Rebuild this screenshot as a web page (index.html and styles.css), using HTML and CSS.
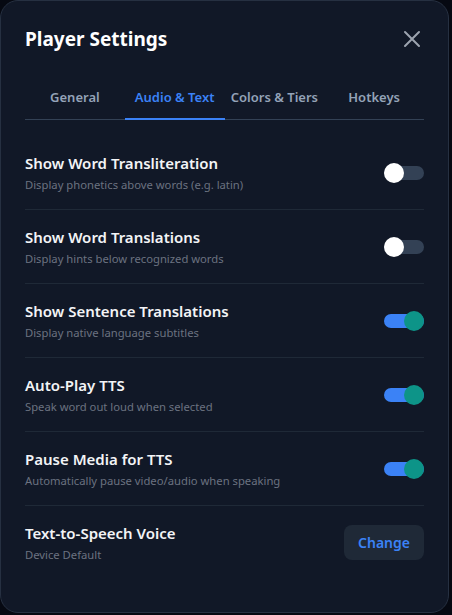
FILE: index.html
```html
<!DOCTYPE html>
<html lang="en">
<head>
  <meta charset="UTF-8" />
  <title>Player Settings</title>
  <link rel="stylesheet" href="styles.css">
</head>
<body>
  <div class="settings-modal">
    <div class="modal-header">
      <h2>Player Settings</h2>
      <button class="close-btn" aria-label="Close">
        <svg width="18" height="18" viewBox="0 0 18 18" fill="none" stroke="currentColor" stroke-width="2" stroke-linecap="round">
          <path d="M2 2 L16 16 M16 2 L2 16" />
        </svg>
      </button>
    </div>

    <div class="tabs">
      <button class="tab">General</button>
      <button class="tab active">Audio &amp; Text</button>
      <button class="tab">Colors &amp; Tiers</button>
      <button class="tab">Hotkeys</button>
    </div>

    <div class="setting-list">
      <div class="setting-row">
        <div class="setting-text">
          <div class="setting-title">Show Word Transliteration</div>
          <div class="setting-desc">Display phonetics above words (e.g. latin)</div>
        </div>
        <span class="toggle"><span class="knob"></span></span>
      </div>
      <div class="setting-row">
        <div class="setting-text">
          <div class="setting-title">Show Word Translations</div>
          <div class="setting-desc">Display hints below recognized words</div>
        </div>
        <span class="toggle"><span class="knob"></span></span>
      </div>
      <div class="setting-row">
        <div class="setting-text">
          <div class="setting-title">Show Sentence Translations</div>
          <div class="setting-desc">Display native language subtitles</div>
        </div>
        <span class="toggle on"><span class="knob"></span></span>
      </div>
      <div class="setting-row">
        <div class="setting-text">
          <div class="setting-title">Auto-Play TTS</div>
          <div class="setting-desc">Speak word out loud when selected</div>
        </div>
        <span class="toggle on"><span class="knob"></span></span>
      </div>
      <div class="setting-row">
        <div class="setting-text">
          <div class="setting-title">Pause Media for TTS</div>
          <div class="setting-desc">Automatically pause video/audio when speaking</div>
        </div>
        <span class="toggle on"><span class="knob"></span></span>
      </div>
      <div class="setting-row">
        <div class="setting-text">
          <div class="setting-title">Text-to-Speech Voice</div>
          <div class="setting-desc">Device Default</div>
        </div>
        <button class="change-btn">Change</button>
      </div>
    </div>
  </div>
</body>
</html>
```

FILE: styles.css
```css
body {
  margin: 0;
  background: #060912;
  font-family: "Noto Sans", "Open Sans", sans-serif;
}

.settings-modal {
  box-sizing: border-box;
  width: 449px;
  height: 613px;
  padding: 24px 24px 24px;
  background: #111827;
  border: 1px solid #263041;
  border-radius: 18px;
  color: #f3f4f6;
}

.modal-header {
  display: flex;
  align-items: center;
  justify-content: space-between;
  height: 28px;
}
.modal-header h2 {
  margin: 0;
  font-size: 19px;
  font-weight: 700;
  color: #ffffff;
}
.close-btn {
  display: flex;
  padding: 0;
  margin-right: 3px;
  border: none;
  background: none;
  color: #9ca3af;
  cursor: pointer;
}

.tabs {
  display: grid;
  grid-template-columns: repeat(4, 1fr);
  margin-top: 28px;
  border-bottom: 1px solid #334155;
}
.tab {
  height: 39px;
  padding: 0 0 6px;
  border: none;
  border-bottom: 2px solid transparent;
  margin-bottom: -1px;
  background: none;
  font-family: inherit;
  font-size: 13px;
  font-weight: 600;
  color: #94a3b8;
  cursor: pointer;
}
.tab.active {
  color: #3b82f6;
  border-bottom-color: #3b82f6;
}

.setting-list {
  margin-top: 16px;
}
.setting-row {
  display: flex;
  align-items: center;
  justify-content: space-between;
  padding: 16px 0;
  border-bottom: 1px solid #1f2937;
}
.setting-row:last-child {
  border-bottom: none;
}
.setting-title {
  font-size: 15px;
  font-weight: 600;
  line-height: 22px;
  color: #f3f4f6;
}
.setting-desc {
  margin-top: 3px;
  font-size: 11.25px;
  line-height: 16px;
  color: #6b7280;
}

.toggle {
  position: relative;
  width: 40px;
  height: 14px;
  border-radius: 7px;
  background: #334155;
}
.toggle .knob {
  position: absolute;
  top: -3px;
  left: 0;
  width: 20px;
  height: 20px;
  border-radius: 50%;
  background: #ffffff;
}
.toggle.on {
  background: #3b82f6;
}
.toggle.on .knob {
  left: 20px;
  background: #0d9488;
}

.change-btn {
  width: 80px;
  height: 35px;
  border: none;
  border-radius: 8px;
  background: #1f2937;
  font-family: inherit;
  font-size: 14px;
  font-weight: 600;
  color: #3b82f6;
  cursor: pointer;
}
```
